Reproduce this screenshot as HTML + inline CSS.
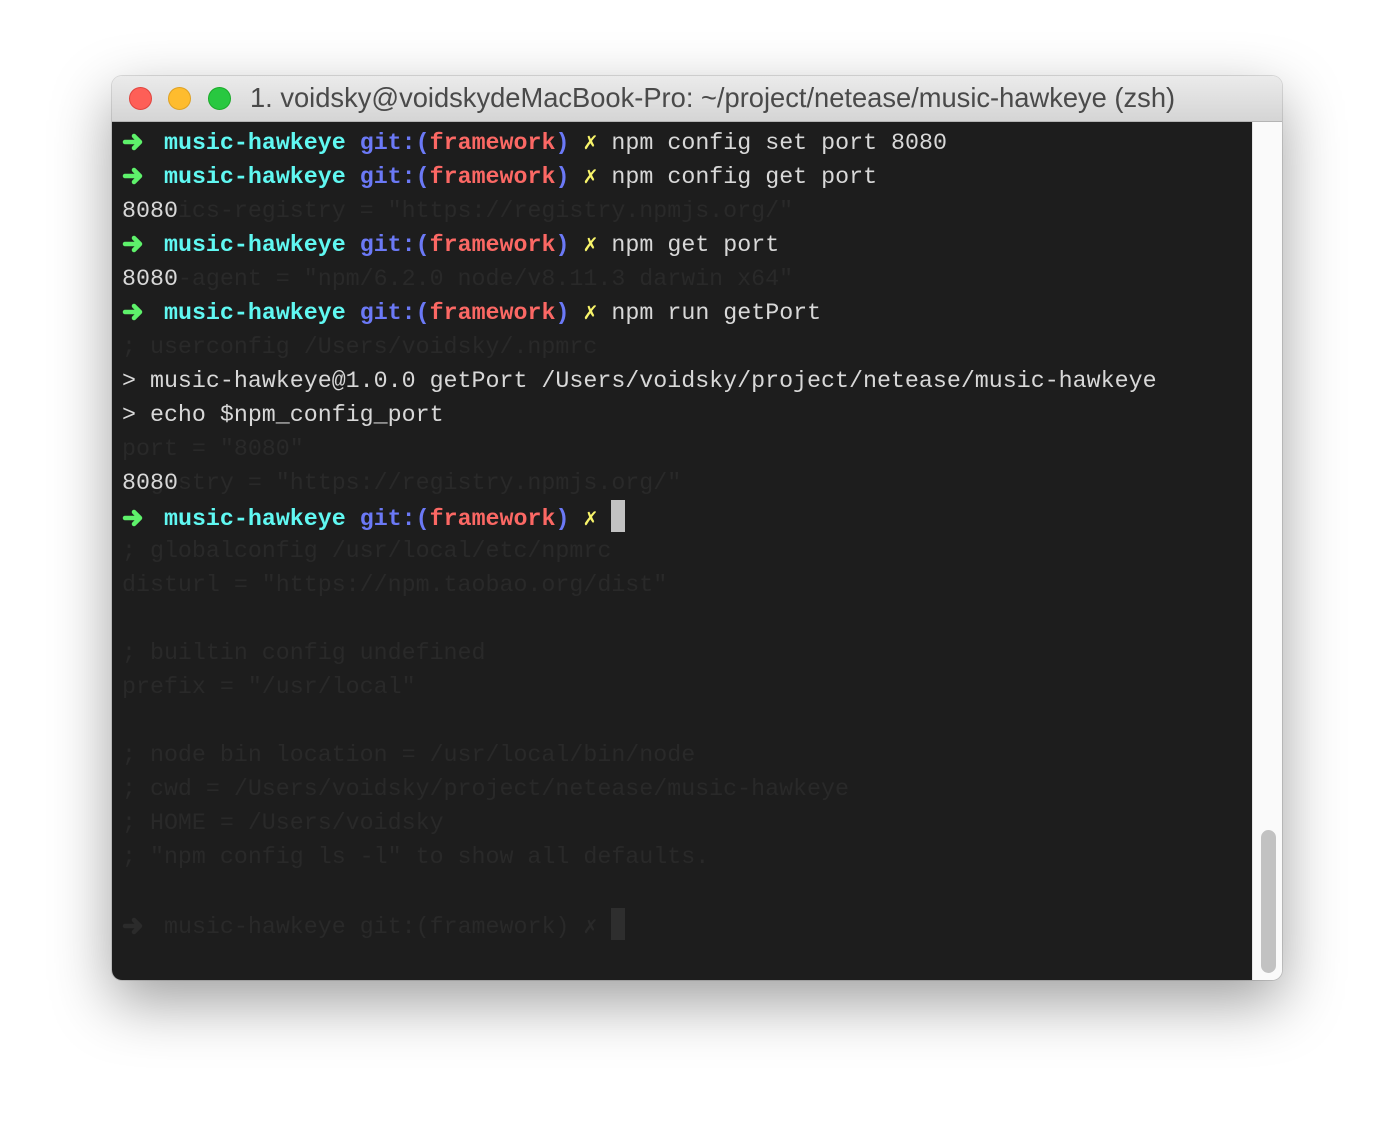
<!DOCTYPE html>
<html><head><meta charset="utf-8"><style>
html,body{margin:0;padding:0;background:#fff;width:1394px;height:1128px;overflow:hidden}
.win{position:absolute;left:112px;top:76px;width:1170px;height:904px;border-radius:10px;overflow:hidden;box-shadow:0 22px 60px rgba(0,0,0,.38),0 0 0 1px rgba(0,0,0,.12)}
.title{position:absolute;left:0;top:0;width:100%;height:45px;background:linear-gradient(#ebebeb,#d5d5d5);border-bottom:1px solid #b4b4b4}
.dot{position:absolute;top:11px;width:23px;height:23px;border-radius:50%;box-sizing:border-box}
.title span.t{position:absolute;left:138px;top:6px;font:27.3px "Liberation Sans",sans-serif;color:#4a4a4a;white-space:nowrap}
.term{position:absolute;left:0;top:46px;width:1140px;height:858px;background:#1d1d1d}
.sb{position:absolute;left:1140px;top:46px;width:30px;height:858px;background:#fafafa;border-left:1px solid #e6e6e6}
.thumb{position:absolute;left:8px;top:708px;width:15px;height:143px;border-radius:8px;background:#c2c2c2}
pre{position:absolute;left:10px;top:4px;margin:0;font:23.3px/34px "Liberation Mono",monospace;white-space:pre}
.ghost{color:#292929}
.fg{color:#d8d8d8}
.g{color:#5ef16b;font-weight:bold}.c{color:#60f8f2;font-weight:bold}.b{color:#6b79f6;font-weight:bold}.r{color:#fb6864;font-weight:bold}.y{color:#f8f46a;font-weight:bold}
.cur{display:inline-block;width:14px;height:32px;background:#c2c2c2;vertical-align:-7px}
.gcur{display:inline-block;width:14px;height:32px;background:#2e2e2e;vertical-align:-7px}
.ar{display:inline-block;width:28px;height:20px;vertical-align:-3px}
</style></head><body>
<div class="win">
<div class="title">
<div class="dot" style="left:17px;background:#fe5f57;border:1px solid #e0443e"></div>
<div class="dot" style="left:56px;background:#febc2e;border:1px solid #dea123"></div>
<div class="dot" style="left:96px;background:#28c840;border:1px solid #1aab29"></div>
<span class="t">1. voidsky@voidskydeMacBook-Pro: ~/project/netease/music-hawkeye (zsh)</span>
</div>
<div class="term">
<pre class="ghost">


metrics-registry = "https://registry.npmjs.org/"

user-agent = "npm/6.2.0 node/v8.11.3 darwin x64"

; userconfig /Users/voidsky/.npmrc


port = "8080"
registry = "https://registry.npmjs.org/"

; globalconfig /usr/local/etc/npmrc
disturl = "https://npm.taobao.org/dist"

; builtin config undefined
prefix = "/usr/local"

; node bin location = /usr/local/bin/node
; cwd = /Users/voidsky/project/netease/music-hawkeye
; HOME = /Users/voidsky
; "npm config ls -l" to show all defaults.

<svg class="ar" viewBox="0 0 28 20"><path d="M3 10H17M12 4L18 10L12 16" stroke="#2b2b2b" stroke-width="4.5" fill="none" stroke-linecap="round" stroke-linejoin="round"/></svg> music-hawkeye git:(framework) ✗ <span class="gcur"></span></pre>
<pre class="fg"><svg class="ar" viewBox="0 0 28 20"><path d="M3 10H17M12 4L18 10L12 16" stroke="#5ef16b" stroke-width="4.5" fill="none" stroke-linecap="round" stroke-linejoin="round"/></svg> <span class="c">music-hawkeye</span> <span class="b">git:(</span><span class="r">framework</span><span class="b">)</span> <span class="y">✗</span> npm config set port 8080
<svg class="ar" viewBox="0 0 28 20"><path d="M3 10H17M12 4L18 10L12 16" stroke="#5ef16b" stroke-width="4.5" fill="none" stroke-linecap="round" stroke-linejoin="round"/></svg> <span class="c">music-hawkeye</span> <span class="b">git:(</span><span class="r">framework</span><span class="b">)</span> <span class="y">✗</span> npm config get port
8080
<svg class="ar" viewBox="0 0 28 20"><path d="M3 10H17M12 4L18 10L12 16" stroke="#5ef16b" stroke-width="4.5" fill="none" stroke-linecap="round" stroke-linejoin="round"/></svg> <span class="c">music-hawkeye</span> <span class="b">git:(</span><span class="r">framework</span><span class="b">)</span> <span class="y">✗</span> npm get port
8080
<svg class="ar" viewBox="0 0 28 20"><path d="M3 10H17M12 4L18 10L12 16" stroke="#5ef16b" stroke-width="4.5" fill="none" stroke-linecap="round" stroke-linejoin="round"/></svg> <span class="c">music-hawkeye</span> <span class="b">git:(</span><span class="r">framework</span><span class="b">)</span> <span class="y">✗</span> npm run getPort

&gt; music-hawkeye@1.0.0 getPort /Users/voidsky/project/netease/music-hawkeye
&gt; echo $npm_config_port

8080
<svg class="ar" viewBox="0 0 28 20"><path d="M3 10H17M12 4L18 10L12 16" stroke="#5ef16b" stroke-width="4.5" fill="none" stroke-linecap="round" stroke-linejoin="round"/></svg> <span class="c">music-hawkeye</span> <span class="b">git:(</span><span class="r">framework</span><span class="b">)</span> <span class="y">✗</span> <span class="cur"></span></pre>
</div>
<div class="sb"><div class="thumb"></div></div>
</div>
</body></html>
